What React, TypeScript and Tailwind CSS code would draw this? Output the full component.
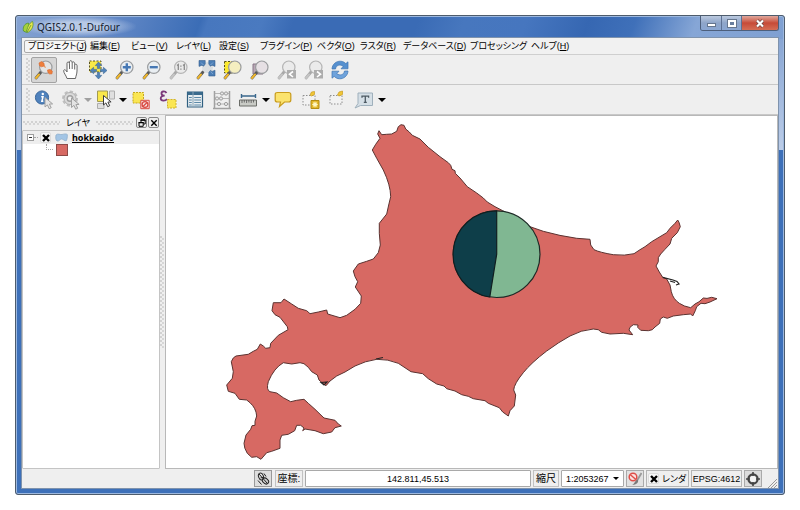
import React from 'react';

type IconProps = { children: React.ReactNode };

function Icon({ children }: IconProps) {
  return (
    <svg viewBox="0 0 24 24" className="w-6 h-6 shrink-0" fill="none" aria-hidden="true">
      {children}
    </svg>
  );
}

function Lens({ muted = false, fill = '#e9eef2' }: { muted?: boolean; fill?: string }) {
  return (
    <>
      <path d="M9 14L4 20" stroke={muted ? '#a8a8a8' : '#5a5a5a'} strokeWidth="2.8" strokeLinecap="round" />
      <path d="M7 16.5L4 20" stroke={muted ? '#c4c4c4' : '#efb62c'} strokeWidth="2" strokeLinecap="round" />
      <circle cx="13.8" cy="9.2" r="6.2" fill={fill} stroke={muted ? '#b4b4b4' : '#9a9c9e'} strokeWidth="1.2" />
    </>
  );
}

function Cursor({ x, y, muted = false }: { x: number; y: number; muted?: boolean }) {
  return (
    <path
      transform={`translate(${x} ${y})`}
      d="M0 0L0 9.5L2.4 7.4L4.2 11.2L6.2 10.2L4.4 6.6L7.6 6.4Z"
      fill={muted ? '#e4e4e4' : '#fff'}
      stroke={muted ? '#a0a0a0' : '#3c3c3c'}
      strokeWidth="1"
      strokeLinejoin="round"
    />
  );
}

const navTools = [
  {
    name: 'Touch zoom and pan',
    active: true,
    icon: (
      <>
        <Lens fill="#e4e4e4" />
        <path d="M7 5L9.5 3.6L12 5.2L12.3 8L9.5 8.8L7.6 7.8Z" fill="#ee7f3d" stroke="#d9642a" strokeWidth=".6" />
        <path d="M15.5 12L18 11.4L20.3 13L20 15.8L17.6 16L16 14.6Z" fill="#ee7f3d" stroke="#d9642a" strokeWidth=".6" />
        <path d="M12 8L13.6 9.6" stroke="#e8975f" strokeWidth="1.2" />
      </>
    ),
  },
  {
    name: 'Pan map',
    icon: (
      <path
        d="M8 20.5C7 17 4.5 15 4.7 12.6C5 11 7 11.6 8 14L8 5.2C8 3.6 10.3 3.6 10.4 5.2L10.6 3.6C10.8 2.3 12.8 2.3 13 3.8L13.2 4.6C13.5 3.4 15.5 3.6 15.6 5.2L15.7 6.8C16.2 5.8 18.1 6 18.1 7.8L18 13C18 16 16.8 18 16.5 20.5ZM10.4 5.2L10.6 11M13.2 4.6V11M15.7 6.8V11.5"
        fill="#fff"
        stroke="#666"
        strokeWidth="1"
        strokeLinejoin="round"
      />
    ),
  },
  {
    name: 'Pan map to selection',
    icon: (
      <>
        <path d="M3.5 3H15V14H3.5Z" fill="#f8e948" stroke="#5b5526" strokeWidth="1" strokeDasharray="2 1.5" />
        <path
          d="M12.5 4L15.7 7.6H13.6V10.6H11.4V7.6H9.3ZM12.5 21L15.7 17.4H13.6V14.4H11.4V17.4H9.3ZM4 12.5L7.6 9.3V11.4H10.6V13.6H7.6V15.7ZM21 12.5L17.4 9.3V11.4H14.4V13.6H17.4V15.7Z"
          fill="#4f82ba"
          stroke="#3d6896"
          strokeWidth=".6"
        />
      </>
    ),
  },
  {
    name: 'Zoom in',
    icon: (
      <>
        <Lens />
        <path d="M13.8 5.2V13.2M9.8 9.2H17.8" stroke="#4678b4" strokeWidth="2.4" />
      </>
    ),
  },
  {
    name: 'Zoom out',
    icon: (
      <>
        <Lens />
        <path d="M9.8 9.2H17.8" stroke="#4678b4" strokeWidth="2.4" />
      </>
    ),
  },
  {
    name: 'Zoom to native resolution',
    icon: (
      <>
        <Lens muted fill="#eaeaea" />
        <path d="M10 7.5L11.3 6.5V12M16 7.5L17.3 6.5V12M13.9 7.5V8.7M13.9 10.5V11.7" stroke="#8b8b8b" strokeWidth="1.3" />
      </>
    ),
  },
  {
    name: 'Zoom full',
    icon: (
      <>
        <path d="M9 14L4 20" stroke="#5a5a5a" strokeWidth="2.8" strokeLinecap="round" />
        <path d="M7 16.5L4 20" stroke="#efb62c" strokeWidth="2" strokeLinecap="round" />
        <circle cx="13.5" cy="9.5" r="5.5" fill="#d9dde0" />
        <path
          d="M5 2.5H11.2V6L9.6 8.2L8 7.2L5 8.4ZM21 2.5H14.8V6L16.4 8.2L18 7.2L21 8.4ZM21 18H14.8V14.6L16.4 12.4L18 13.4L21 12.2Z"
          fill="#4a7db5"
          stroke="#355f8e"
          strokeWidth=".6"
        />
        <path d="M7 4.5L9.5 7M19 4.5L16.5 7M19 16L16.5 13.6" stroke="#86acd6" strokeWidth=".8" />
      </>
    ),
  },
  {
    name: 'Zoom to selection',
    icon: (
      <>
        <path d="M3.5 3.5H14V15H3.5Z" fill="#fbe92c" stroke="#55501c" strokeWidth="1" strokeDasharray="2 1.5" />
        <Lens fill="#f5efc0" />
      </>
    ),
  },
  {
    name: 'Zoom to layer',
    icon: (
      <>
        <path d="M5 6H15V16H5Z" fill="#b9a7b6" stroke="#877786" />
        <Lens fill="#e6e0e4" />
      </>
    ),
  },
  {
    name: 'Zoom last',
    icon: (
      <>
        <Lens muted fill="#ebebeb" />
        <path d="M12 12H21V20.5H12Z" fill="#adadad" />
        <path d="M18 13.5L14.5 16.2L18 19" stroke="#fff" strokeWidth="1.6" />
      </>
    ),
  },
  {
    name: 'Zoom next',
    icon: (
      <>
        <Lens muted fill="#ebebeb" />
        <path d="M12 12H21V20.5H12Z" fill="#adadad" />
        <path d="M15 13.5L18.5 16.2L15 19" stroke="#fff" strokeWidth="1.6" />
      </>
    ),
  },
  {
    name: 'Refresh',
    icon: (
      <>
        <path d="M3 11C3.2 6 7.5 3 11.5 3.2C14 3.3 15.6 4.4 16.8 5.6L19 3.8V10.8H12L14.2 8.4C11.5 6 7 7 6.5 11Z" fill="#5690cf" stroke="#3d74b2" strokeWidth=".7" />
        <path d="M19 13C18.8 18 14.5 21 10.5 20.8C8 20.7 6.4 19.6 5.2 18.4L3 20.2V13.2H10L7.8 15.6C10.5 18 15 17 15.5 13Z" fill="#6fa3dc" stroke="#3d74b2" strokeWidth=".7" />
      </>
    ),
  },
];

const attributeTools = [
  {
    name: 'Identify features',
    icon: (
      <>
        <circle cx="10" cy="9.5" r="6.6" fill="#4f82bd" stroke="#3b689c" />
        <circle cx="10.8" cy="6" r="1.2" fill="#fff" />
        <path d="M9.2 8.8H11L9.9 13.2H11.3" stroke="#fff" strokeWidth="1.5" />
        <Cursor x={13} y={9.5} muted />
      </>
    ),
  },
  {
    name: 'Run feature action',
    menu: true,
    muted: true,
    icon: (
      <>
        <circle cx="11" cy="10.5" r="7" stroke="#c0c0c0" strokeWidth="2" strokeDasharray="3.4 2" />
        <circle cx="11" cy="10.5" r="6" fill="#dadada" stroke="#b0b0b0" />
        <circle cx="11" cy="10.5" r="2.8" fill="#efefef" stroke="#a0a0a0" strokeWidth="1.4" />
        <Cursor x={12.5} y={10} muted />
      </>
    ),
  },
  {
    name: 'Select features',
    menu: true,
    icon: (
      <>
        <path d="M15.5 3H20.5V11H15.5ZM3.5 15.5H10V20.5H3.5Z" fill="#dfdfdf" stroke="#adadad" />
        <path d="M3.5 3H13.5V13.5H3.5Z" fill="#fae74b" stroke="#a19a55" />
        <Cursor x={9.5} y={7.5} />
      </>
    ),
  },
  {
    name: 'Deselect features',
    icon: (
      <>
        <path d="M4 4.5H14.5V15H4Z" fill="#fae653" stroke="#c6a81e" strokeDasharray="2 1" />
        <path d="M11.8 12.3H20.2V20.7H11.8Z" fill="#f7dede" stroke="#d94a43" />
        <circle cx="16" cy="16.5" r="2.9" stroke="#d94a43" strokeWidth="1.3" />
        <path d="M18 14.5L14 18.5" stroke="#d94a43" strokeWidth="1.3" />
      </>
    ),
  },
  {
    name: 'Select by expression',
    icon: (
      <>
        <path d="M10.5 5C9 2.6 5.3 3.2 5.5 5.6C5.6 7.2 7 7.7 8.7 7.7C6.2 7.7 4.6 8.7 4.7 10.4C4.9 13.2 9.4 13.4 11 10.9" stroke="#7b3a7a" strokeWidth="1.8" />
        <path d="M11.5 11.5H20V20H11.5Z" fill="#fae653" stroke="#d0b32c" strokeDasharray="2 1" />
      </>
    ),
  },
  {
    name: 'Open attribute table',
    icon: (
      <>
        <path d="M4.5 4H19.5V19H4.5Z" fill="#e7edf0" stroke="#2f5f80" strokeWidth="1.2" />
        <path d="M4.5 4H19.5V7H4.5Z" fill="#3a6b8d" />
        <path d="M10 4V19" stroke="#87a2b4" />
        <path d="M6 9.5H8.8M6 12H8.8M6 14.5H8.8M6 17H8.8M11.2 9.5H18M11.2 12H18M11.2 14.5H18M11.2 17H18" stroke="#5c89a8" strokeWidth="1.1" />
      </>
    ),
  },
  {
    name: 'Field calculator',
    icon: (
      <>
        <path d="M4.5 3V20M19.5 3V20M3 20.5H21" stroke="#a0a0a0" strokeWidth="1.5" />
        <path d="M4.5 5.5H19.5M4.5 10.5H19.5M4.5 16H19.5" stroke="#a8a8a8" strokeWidth=".8" />
        <g fill="#e8e8e8" stroke="#959595" strokeWidth=".9">
          <circle cx="12" cy="5.5" r="1.6" />
          <circle cx="16" cy="5.5" r="1.6" />
          <circle cx="7" cy="10.5" r="1.6" />
          <circle cx="11" cy="10.5" r="1.6" />
          <circle cx="9" cy="16" r="1.6" />
          <circle cx="16" cy="16" r="1.6" />
        </g>
      </>
    ),
  },
  {
    name: 'Measure line',
    menu: true,
    icon: (
      <>
        <path d="M4.5 8H18.5M4.5 6V10M18.5 6V10" stroke="#3a678c" strokeWidth="1.4" />
        <path d="M2.5 12H19.5V18H2.5Z" fill="#c9cbc6" stroke="#6b6d68" />
        <path d="M5 12V15M7.3 12V14.5M9.6 12V15M11.9 12V14.5M14.2 12V15M16.5 12V14.5" stroke="#555" strokeWidth=".8" />
      </>
    ),
  },
  {
    name: 'Map tips',
    icon: <path d="M5.5 4.5H16.5C18 4.5 18.8 5.3 18.8 6.5V12C18.8 13.3 18 14 16.5 14H12.5L7.5 18.5L8.5 14H5.5C4 14 3.2 13.3 3.2 12V6.5C3.2 5.3 4 4.5 5.5 4.5Z" fill="#fbe36e" stroke="#c99c1d" strokeWidth="1.2" />,
  },
  {
    name: 'New bookmark',
    icon: (
      <>
        <path d="M4 7.5H16V17H4Z" fill="#f2f2f2" stroke="#8e8e8e" strokeDasharray="1.5 1.5" />
        <path d="M11 7L12.5 4L15.5 3.5V6.5L12.5 8Z" fill="#f1c636" stroke="#c99c1d" strokeWidth=".7" />
        <path d="M12 12.5H20V20.5H12Z" fill="#e2b62b" stroke="#b58d14" />
        <path d="M16 13.8V19.2M13.3 16.5H18.7M14.2 14.7L17.8 18.3M17.8 14.7L14.2 18.3" stroke="#fff7c4" strokeWidth="1.1" />
      </>
    ),
  },
  {
    name: 'Show bookmarks',
    icon: (
      <>
        <path d="M4 7.5H16V16H4Z" fill="#f2f2f2" stroke="#8e8e8e" strokeDasharray="1.5 1.5" />
        <path d="M11.5 7L13 4L16.5 3V6.5L13 8Z" fill="#f1c636" stroke="#c99c1d" strokeWidth=".7" />
      </>
    ),
  },
  {
    name: 'Text annotation',
    menu: true,
    icon: (
      <>
        <path d="M5 5H19.5V17.5H7.5L2 20L5 15.5Z" fill="#d5dfe6" stroke="#9fb0bc" />
        <path d="M9 9.8V8.2H15.6V9.8M12.3 8.2V14.2M10.8 14.3H13.8" stroke="#4d5a63" strokeWidth="1.3" />
      </>
    ),
  },
];

type Tool = { name: string; icon: React.ReactNode; active?: boolean; menu?: boolean; muted?: boolean };

function Toolbar({ label, tools }: { label: string; tools: Tool[] }) {
  return (
    <div role="toolbar" aria-label={label} className="flex items-center h-[30px] pl-[4px] border-b border-[#c8c8c8]">
      <DotPattern className="w-[4px] h-[24px] mr-px" />
      <div className="flex gap-px">
        {tools.map(tool => (
          <div key={tool.name} className="flex items-center">
            <button
              type="button"
              aria-label={tool.name}
              className={`flex items-center justify-center w-[26px] h-[26px] rounded-[2px] border ${
                tool.active ? 'bg-[#d6d6d6] border-[#a3a3a3]' : 'border-transparent'
              }`}
            >
              <Icon>{tool.icon}</Icon>
            </button>
            {tool.menu && (
              <button type="button" aria-label={`${tool.name} options`} className="w-[8px] h-[26px] flex items-center justify-center">
                <svg viewBox="0 0 8 4" className="w-2 h-1" aria-hidden="true">
                  <path d="M0 0H8L4 4Z" fill={tool.muted ? '#a0a0a0' : '#000'} />
                </svg>
              </button>
            )}
          </div>
        ))}
      </div>
    </div>
  );
}

// Embossed drag handle used by toolbars, docks and the splitter
function DotPattern({ className }: { className: string }) {
  return (
    <div
      className={`${className} bg-[radial-gradient(circle_at_1px_1px,#d2d2d2_1px,transparent_1px),radial-gradient(circle_at_3px_3px,#d6d6d6_1px,transparent_1px)] bg-[size:4px_4px]`}
    />
  );
}

const menus = [
  { label: 'プロジェクト', hotkey: 'J', width: 'w-[62px]', active: true },
  { label: '編集', hotkey: 'E', width: 'w-[41px]' },
  { label: 'ビュー', hotkey: 'V', width: 'w-[45px]' },
  { label: 'レイヤ', hotkey: 'L', width: 'w-[43px]' },
  { label: '設定', hotkey: 'S', width: 'w-[41px]' },
  { label: 'プラグイン', hotkey: 'P', width: 'w-[57px]' },
  { label: 'ベクタ', hotkey: 'O', width: 'w-[43px]' },
  { label: 'ラスタ', hotkey: 'R', width: 'w-[43px]' },
  { label: 'データベース', hotkey: 'D', width: 'w-[67px]' },
  { label: 'プロセッシング', width: 'w-[61px]' },
  { label: 'ヘルプ', hotkey: 'H', width: 'w-[44px]' },
];

function MenuBar() {
  return (
    <nav className="flex items-center h-[17px] pl-[2px] border-b border-[#cfcfcf] bg-[#f1f1f1]">
      {menus.map(menu => (
        <button
          key={menu.label}
          type="button"
          className={`${menu.width} h-[13px] flex items-center pl-[3px] whitespace-nowrap border ${
            menu.active ? 'border-[#a9a9a9] rounded-[2px] bg-[#f6f6f6]' : 'border-transparent'
          }`}
        >
          {menu.label}
          {menu.hotkey && (
            <span>
              (<u>{menu.hotkey}</u>)
            </span>
          )}
        </button>
      ))}
    </nav>
  );
}

function TitleBar() {
  return (
    <header className="flex items-start justify-between h-[21px] pl-[1px]">
      <div className="flex items-center gap-[3px] h-[21px] pr-4 bg-[radial-gradient(ellipse_at_center,rgba(215,226,242,0.7)_30%,transparent_72%)]">
        <svg viewBox="0 0 12 14" className="w-3 h-[14px]" aria-hidden="true">
          <path d="M1.5 11C.5 7 2.5 3.5 6.5 3C7.5 6 6 10 3.5 12Z" fill="#a5d03c" stroke="#4c8f22" strokeWidth=".7" />
          <path d="M4.5 12.5C5 8 7 3 10.5 1.5C12 5 10.5 9.5 6.5 12Z" fill="#e8e54f" stroke="#5d9a2c" strokeWidth=".8" />
          <path d="M5 12.5L9 5" stroke="#5d9a2c" strokeWidth=".8" />
        </svg>
        <h1 className="font-['Noto_Sans','Noto_Sans_CJK_JP',sans-serif] text-[10px] leading-[14px] text-[#14202e]">QGIS2.0.1-Dufour</h1>
      </div>
      <div className="flex h-[15px] rounded-b-[3px] border border-t-0 border-[#4d5f7c] overflow-hidden">
        <button type="button" aria-label="最小化" className="w-[21px] flex items-center justify-center border-r border-[#5d7194] bg-linear-to-b from-[#bccadf] via-[#8ea5c9] to-[#8aa6d2]">
          <span className="w-[9px] h-[4px] mt-[4px] bg-white border border-[#66768e]" />
        </button>
        <button type="button" aria-label="最大化" className="w-[20px] flex items-center justify-center border-r border-[#5d7194] bg-linear-to-b from-[#bccadf] via-[#8ea5c9] to-[#8aa6d2]">
          <span className="w-[8px] h-[7px] bg-[#6a7f9e] border-2 border-white outline outline-[#66768e]" />
        </button>
        <button type="button" aria-label="閉じる" className="w-[36px] flex items-center justify-center bg-linear-to-b from-[#dfa79c] via-[#c64a38] to-[#d46d55]">
          <svg viewBox="0 0 10 9" className="w-[10px] h-[9px]" aria-hidden="true">
            <path d="M2 1.5L8 7.5M8 1.5L2 7.5" stroke="#5e3a3a" strokeWidth="3.4" />
            <path d="M2 1.5L8 7.5M8 1.5L2 7.5" stroke="#fff" strokeWidth="2.2" />
          </svg>
        </button>
      </div>
    </header>
  );
}

function CheckBox({ id }: { id: string }) {
  return (
    <span className="grid shrink-0 place-items-center w-[11px] h-[11px]">
      <input
        id={id}
        type="checkbox"
        defaultChecked
        className="peer col-start-1 row-start-1 appearance-none w-[11px] h-[11px] rounded-[2px] border border-[#dcdcdc] bg-[#f7f7f7]"
      />
      <svg viewBox="0 0 8 8" className="hidden peer-checked:block col-start-1 row-start-1 w-2 h-2 pointer-events-none" aria-hidden="true">
        <path d="M1 1L7 7M7 1L1 7" stroke="#000" strokeWidth="2.4" />
      </svg>
    </span>
  );
}

function LayersPanel() {
  return (
    <aside className="flex flex-col w-[138px] shrink-0">
      <div className="flex items-center h-[15px] px-px">
        <DotPattern className="flex-1 h-[4px]" />
        <h2 className="px-[6px]">レイヤ</h2>
        <DotPattern className="flex-1 h-[4px]" />
        <button type="button" aria-label="フロート" className="ml-[3px] w-[11px] h-[11px] grid place-items-center rounded-[2px] border border-[#888]">
          <svg viewBox="0 0 8 8" className="w-2 h-2" fill="none" stroke="#000" aria-hidden="true">
            <path d="M3 3V1H7.2V5H5.5M1 3.5H5.2V7.3H1Z" />
            <path d="M2.5 1H7.5M.5 3.6H5.7" strokeWidth="1.4" />
          </svg>
        </button>
        <button type="button" aria-label="閉じる" className="ml-px w-[11px] h-[11px] grid place-items-center rounded-[2px] border border-[#888]">
          <svg viewBox="0 0 8 8" className="w-2 h-2" aria-hidden="true">
            <path d="M1.3 1.3L6.7 6.7M6.7 1.3L1.3 6.7" stroke="#000" strokeWidth="1.4" />
          </svg>
        </button>
      </div>
      <ul className="flex-1 bg-white border border-[#c4c4c4] rounded-[1px]">
        <li>
          <div className="flex items-center h-[13px] pl-[4px] bg-[#eee]">
            <button type="button" aria-label="折りたたむ" className="w-[7px] h-[7px] grid place-items-center border border-[#9d9d9d] bg-white">
              <span className="w-[3px] h-px bg-[#333]" />
            </button>
            <span className="w-[4px] mr-[2px] border-t border-dotted border-[#a8a8a8]" />
            <CheckBox id="layer-visible" />
            <label htmlFor="layer-visible" className="flex items-center">
              <svg viewBox="0 0 13 9" className="w-[13px] h-[9px] mx-[4px]" aria-hidden="true">
                <path d="M1 2C3 0 5 2 7 1.5C9 1 11 .5 12.3 1.5C12.6 4 12 6 11.5 7.5C9.5 8.5 8.5 6 6.5 6C5 6 4.5 8.5 2 8C.5 7 .5 4 1 2Z" fill="#a3c5e5" stroke="#8aaac8" strokeWidth=".7" />
              </svg>
              <span className="font-['Noto_Sans',sans-serif] font-bold underline">hokkaido</span>
            </label>
          </div>
          <div className="flex h-[13px] pl-[23px]">
            <span className="w-[7px] h-[6px] mr-[3px] border-l border-b border-dotted border-[#a8a8a8]" />
            <span className="w-[12px] h-[12px] bg-[#d76963] border border-[#8d4a47]" />
          </div>
        </li>
      </ul>
    </aside>
  );
}

const coastline =
  'M379 130.7L381.7 134.7L386.7 134.3L391.7 134L396.7 131.3L398.3 126.7L401 124.7L404 125.3L405.7 129L409.3 132L412.3 135.3L420 139L428.3 147.3L440 156.7L448.3 162.7L450.7 165.3L452 169.3L455 170.7L455.3 173.3L460 178L467.3 186.7L476.7 193L483.3 198L487.3 202L495 206.7L502.7 210.7L517 219L530 226.7L543.3 231.3Q560 236 576.7 238.3L590 239.3L590.7 245L594 249.7Q600 252.5 613.3 254.7Q625 256 634 253.7L640 249.7L645 246.7L651.7 241.7L660 236.7L666.7 232.7L670 228.3L675 223.3L677.7 220L679 222.3L680.3 226.7L677.3 232.7L671.7 238.3L670 244L665 249.3L660.7 254L658.3 257.7V261.7L656 266L659.3 272L662.7 277.3L666.7 279L670 285L671.3 291.7Q673 299 679.3 303.3Q684 306.5 690.7 307.7L695 304L699 301.8L703.3 298L707 298.4L711.7 297.3L717 298.7L710 302L705 303.7L701 303.3L696.7 306.7L695.3 310.7L692.7 316L690.7 314L683.3 314.7L673.3 316L667.3 318.3L663.3 317L660.3 319L659.7 323.3L655 327L652.3 329.7L648.3 330.7L640.7 330.3L637.7 327.3L638 325L633.3 324.7Q629 327 629 330L632.7 334.7L623.3 333.3L610 334L601.7 332.3L598.3 329.7L593.3 329Q581 330 570 336Q559 342 546.7 351Q531 363 523.3 372.7Q514 384 513.7 390L515.7 395L514.3 406L510 410.7L508.3 416L502.7 412L499.3 407.7L488.3 403.3L485 400.7L473.3 398.7L468.3 396.3L461.7 394.7L455 391L446.7 388.7L444 386L436.7 384L428.3 378.7L422.7 373.7L411 371.7L398.3 363.3Q388 359 376.7 359.3Q365 361 355 366L345 372L336.7 376L330 381L326 385.7L322 382.7L319 380L317.3 375L311.7 371.7L308.3 367.3L304 363.7L300 362.7L291.7 364L283.3 362.7Q274 368 268.3 381.7Q266 390 270 391.7L276.7 393L283.3 397.7L290.7 401.7L296.7 400.3L304 399.3L308.3 403.3L315 409.3L324 418L335 420.3L338.3 424L341.3 426L335 427.7L331.7 432L323.3 433.7L315 430.7L305 429L302.7 430.7L304 428L300.7 425.3L296.7 425.3L294.7 430.7L288.3 434.3L281.7 435.3L280 440V448.3L271.7 451.3L266.7 452.7L261 459.3L256.7 456.7L251.7 457.3L247.3 453.3Q244 448 244 443.3L246 435L250.7 429.3L252 425.7L255 425.3V421.3L256.7 416Q256 408 250 402.7L246.7 400L239.3 399.3L235 393.3L228.3 391.3L226.7 385L232.3 378.3L233.3 371.7L231.3 361.7Q233 357 236 356L248.3 354.3L253.3 351.3L257.3 349.3L260.3 344L263.3 346L265.7 348.3L270 347.7L270.7 343.3L278.3 335.3L288 329.7L287.3 326.7L280 317.3L275 314.7L272 310.7L273.3 302.7L281 302.7L284 299L291.7 304L298.3 308.3L306.7 310.7L310 313.7L318.3 312L326.7 310L327.7 314L340 317.7L346.7 315.3L355 309.3L360.7 303.3L361.3 296L355.3 287L357.7 281.7L355 276.7L353.3 271L358.3 264L366.7 261.3L373.3 259L378.3 252.7L380.3 245L379.3 233.3V223.3L386.7 214L388.7 205L390.7 196.7Q390.5 185 383.3 170L376.7 158.3L372.3 150L375.7 144.3L380 138.3L377.7 134Z';

function MapCanvas() {
  return (
    <main className="flex flex-1 min-w-0 bg-white border border-[#b8b8b8]">
      <svg viewBox="166 116 611 352" className="w-full h-auto min-h-[352px]" role="img" aria-label="hokkaido">
        <path d={coastline} fill="#d76963" stroke="#5b3331" strokeWidth="1" strokeLinejoin="round" />
        <path d="M662.7 277.3L673 280L677 281.5L679 284L676 285M670 281L675 282.5" fill="none" stroke="#222" strokeWidth="1.2" />
        <path d="M376 359L383 357.5M321 382.5L327 382L324 385Z" fill="none" stroke="#222" strokeWidth="1.2" />
        <circle cx="496.7" cy="254.2" r="43.3" fill="#80b792" stroke="#1c2a26" strokeWidth="1.2" />
        <path d="M496.7 254.2L489.8 297A43.3 43.3 0 0 1 496.7 210.9Z" fill="#0e3e49" stroke="#111e20" strokeWidth="1.2" strokeLinejoin="round" />
      </svg>
    </main>
  );
}

function StatusBar() {
  return (
    <footer className="flex items-center gap-[2px] h-[19px] pl-[232px] pr-px">
      <button type="button" aria-label="マウス座標の切り替え" className="w-[18px] h-[17px] shrink-0 grid place-items-center border border-[#999] bg-[#dedede]">
        <svg viewBox="0 0 14 14" className="w-[14px] h-[14px]" fill="none" stroke="#222" aria-hidden="true">
          <ellipse cx="5" cy="4.5" rx="2.4" ry="3.6" transform="rotate(-20 5 4.5)" />
          <ellipse cx="9.5" cy="9" rx="2.6" ry="3.4" transform="rotate(-50 9.5 9)" fill="#ccc" />
          <path d="M3 2L11 11M8 1.5L10 4.5M2 8.5L5.5 12.5M4.5 6L8 5" />
        </svg>
      </button>
      <label htmlFor="coordinate" className="w-[28px] h-[17px] ml-px shrink-0 flex items-center justify-center border border-[#c2c2c2] text-[10px]">座標:</label>
      <input
        id="coordinate"
        type="text"
        defaultValue="142.811,45.513"
        className="flex-1 min-w-0 h-[17px] text-center bg-white border border-[#a9a9a9] rounded-[1px]"
      />
      <label htmlFor="scale" className="w-[26px] h-[17px] shrink-0 flex items-center justify-center border border-[#c2c2c2] text-[10px]">縮尺</label>
      <span className="grid shrink-0 items-center w-[63px] h-[17px]">
        <select id="scale" defaultValue="1:2053267" className="col-start-1 row-start-1 appearance-none w-full h-[17px] pl-[4px] bg-white border border-[#a9a9a9] rounded-[1px]">
          <option>1:2053267</option>
          <option>1:1000000</option>
          <option>1:500000</option>
        </select>
        <svg viewBox="0 0 6 3" className="col-start-1 row-start-1 justify-self-end w-[6px] h-[3px] mr-[5px] pointer-events-none" aria-hidden="true">
          <path d="M0 0H6L3 3Z" fill="#000" />
        </svg>
      </span>
      <button type="button" aria-label="レンダリング停止" className="w-[18px] h-[17px] shrink-0 grid place-items-center border border-[#aaa] bg-[#e2e2e2]">
        <svg viewBox="0 0 14 14" className="w-[14px] h-[14px]" fill="none" aria-hidden="true">
          <path d="M13.5 1L8.5 9.5" stroke="#9a9a9a" strokeWidth="1.8" />
          <path d="M9.5 7.5C11 9 10 12.5 4 13C7 11.5 6.5 9 9.5 7.5Z" fill="#7a7a7a" />
          <circle cx="5" cy="5" r="3.8" fill="#fbe3e1" stroke="#e04f49" strokeWidth="1.5" />
          <path d="M2.4 2.8L7.6 7.2" stroke="#e04f49" strokeWidth="1.5" />
        </svg>
      </button>
      <span className="w-[43px] h-[17px] shrink-0 flex items-center gap-[3px] pl-px border border-[#b5b5b5]">
        <CheckBox id="render" />
        <label htmlFor="render" className="whitespace-nowrap">レンダ</label>
      </span>
      <span className="w-[51px] h-[17px] shrink-0 flex items-center justify-center border border-[#b5b5b5]">EPSG:4612</span>
      <button type="button" aria-label="CRSステータス" className="w-[18px] h-[17px] shrink-0 grid place-items-center border border-[#aaa] bg-[#dcdcdc]">
        <svg viewBox="0 0 14 14" className="w-[14px] h-[14px]" fill="none" aria-hidden="true">
          <circle cx="7" cy="7" r="4.6" stroke="#444" strokeWidth="2.2" />
          <path d="M7 0V4M7 10V14M0 7H4M10 7H14" stroke="#444" strokeWidth="1.6" />
          <circle cx="7" cy="7" r="3" fill="#f4f4f4" />
        </svg>
      </button>
      <svg viewBox="0 0 10 10" className="w-[10px] h-[10px] ml-[3px] shrink-0 self-end" aria-hidden="true">
        <path d="M1 10L10 1M4 10L10 4M7 10L10 7" stroke="#999" strokeWidth="1" />
      </svg>
    </footer>
  );
}

export default function App() {
  return (
    <div className="min-h-screen flex flex-col p-[15px] bg-white text-black font-['Liberation_Sans','Noto_Sans_CJK_JP',sans-serif] text-[9px] leading-[12px] [font-feature-settings:'palt']">
      <div className="flex-1 flex flex-col px-[5px] pb-[5px] rounded-[3px] border border-[#4e5c6c] shadow-[inset_0_0_0_1px_#9db8de] bg-[linear-gradient(110deg,#86a3d2_0%,#6288c6_13%,#3b6db6_24%,#4777be_25%,#4a7ac0_32%,#3a6bb5_36%,#3a6bb5_52%,#4777be_58%,#4676bf_66%,#3667b2_74%,#3f70b9_80%,#86a6d6_88%,#7fa0d2_100%),linear-gradient(#7e9ed0,#bccde8),linear-gradient(#7e9ed0,#bccde8)] bg-[size:100%_23px,6px_134px,6px_134px] bg-[position:0_0,left_top,right_top] bg-no-repeat bg-[#3d70b9]">
        <TitleBar />
        <div className="flex-1 flex flex-col border border-[#7f93ad] bg-[#efefef]">
          <MenuBar />
          <Toolbar label="地図ナビゲーション" tools={navTools} />
          <Toolbar label="属性" tools={attributeTools} />
          <div className="flex-1 flex">
            <LayersPanel />
            <div className="w-[5px] flex items-center">
              <DotPattern className="w-[4px] h-[112px]" />
            </div>
            <MapCanvas />
          </div>
          <StatusBar />
        </div>
      </div>
    </div>
  );
}
